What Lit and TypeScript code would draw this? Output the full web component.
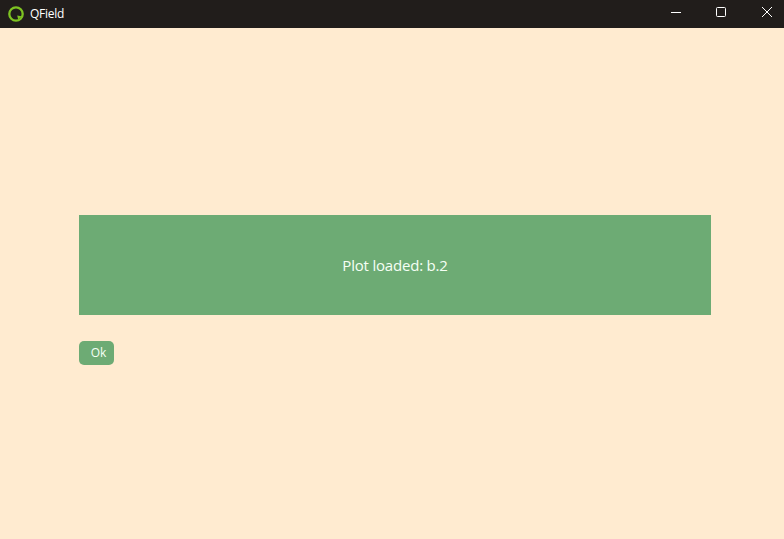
import { LitElement, html, css } from "lit";
import { customElement } from "lit/decorators.js";

@customElement("app-root")
export class AppRoot extends LitElement {
  static styles = css`
    :host {
      display: flex;
      flex-direction: column;
      width: 784px;
      height: 539px;
      overflow: hidden;
      background: #ffebd0;
      font-family: "Open Sans", "Noto Sans", sans-serif;
    }
    .titlebar {
      flex: none;
      height: 28px;
      background: #211d1b;
      display: flex;
      align-items: center;
      color: #fff;
    }
    .logo {
      width: 16px;
      height: 16px;
      margin: -0.5px 0 0 8px;
      flex: none;
    }
    .title {
      margin-left: 6px;
      font-size: 12px;
      line-height: 28px;
      letter-spacing: -0.25px;
    }
    .controls {
      margin-left: auto;
      display: flex;
      gap: 33px;
      padding: 0 11px 4px 0;
      align-items: center;
    }
    .ctl {
      width: 12px;
      height: 12px;
      display: block;
    }
    .close {
      margin-left: 1px;
    }
    .content {
      flex: 1;
      display: flex;
      flex-direction: column;
      align-items: flex-start;
      padding: 187px 73px 0 79px;
    }
    .message {
      align-self: stretch;
      height: 100px;
      background: #6dab74;
      color: #f5fff5;
      display: flex;
      align-items: center;
      justify-content: center;
      font-size: 15px;
      letter-spacing: -0.2px;
    }
    .ok {
      margin-top: 26px;
      width: 35px;
      height: 24px;
      padding: 0 0 0 4px;
      box-sizing: border-box;
      border: none;
      border-radius: 5px;
      background: #6dab74;
      color: #f5fff5;
      font-family: inherit;
      font-size: 12px;
      line-height: 24px;
      text-align: center;
    }
  `;

  render() {
    return html`
      <div class="titlebar">
        <svg class="logo" viewBox="0 0 16 16" fill="none">
          <circle cx="8" cy="8" r="6.7" stroke="#7ec322" stroke-width="2.3"></circle>
          <path d="M9.2 9.4 L13.5 10.2 L10.2 13.4 Z" fill="#7ec322"></path>
        </svg>
        <span class="title">QField</span>
        <div class="controls">
          <svg class="ctl" viewBox="0 0 12 12"><path d="M1 6.5H11" stroke="#fff" stroke-width="1"></path></svg>
          <svg class="ctl" viewBox="0 0 12 12" fill="none"><rect x="1.5" y="1.5" width="9" height="9" rx="1" stroke="#fff" stroke-width="1"></rect></svg>
          <svg class="ctl close" viewBox="0 0 12 12" fill="none"><path d="M1 1L11 11M11 1L1 11" stroke="#fff" stroke-width="1"></path></svg>
        </div>
      </div>
      <div class="content">
        <div class="message">Plot loaded: b.2</div>
        <button class="ok">Ok</button>
      </div>
    `;
  }
}
